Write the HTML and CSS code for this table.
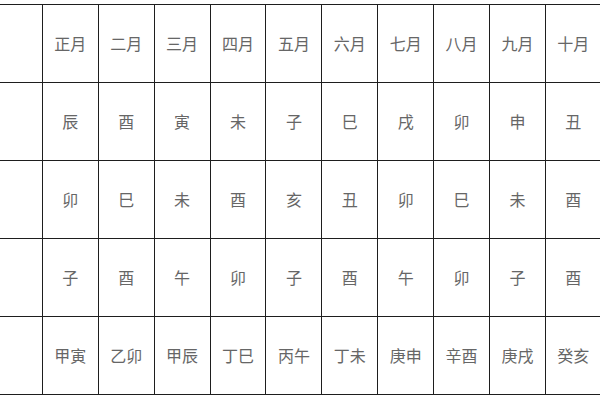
FILE: index.html
```html
<!DOCTYPE html>
<html lang="zh">
<head>
<meta charset="utf-8">
<link rel="stylesheet" href="styles.css">
</head>
<body>
<div class="wrap">
<table class="grid">
<tr><td></td><td>正月</td><td>二月</td><td>三月</td><td>四月</td><td>五月</td><td>六月</td><td>七月</td><td>八月</td><td>九月</td><td>十月</td></tr>
<tr><td></td><td>辰</td><td>酉</td><td>寅</td><td>未</td><td>子</td><td>巳</td><td>戌</td><td>卯</td><td>申</td><td>丑</td></tr>
<tr><td></td><td>卯</td><td>巳</td><td>未</td><td>酉</td><td>亥</td><td>丑</td><td>卯</td><td>巳</td><td>未</td><td>酉</td></tr>
<tr><td></td><td>子</td><td>酉</td><td>午</td><td>卯</td><td>子</td><td>酉</td><td>午</td><td>卯</td><td>子</td><td>酉</td></tr>
<tr><td></td><td>甲寅</td><td>乙卯</td><td>甲辰</td><td>丁巳</td><td>丙午</td><td>丁未</td><td>庚申</td><td>辛酉</td><td>庚戌</td><td>癸亥</td></tr>
</table>
</div>
</body>
</html>
```
FILE: styles.css
```css
html, body {
  margin: 0;
  padding: 0;
  background: #fff;
  overflow: hidden;
  width: 600px;
  height: 400px;
}
.wrap {
  padding-top: 4px;
  margin-left: -14px;
  width: 640px;
}
.grid {
  border-collapse: collapse;
  table-layout: fixed;
  font-family: "Noto Sans CJK SC", "Noto Sans", sans-serif;
  font-size: 16px;
  color: #666;
}
.grid td {
  width: 54.9px;
  height: 75px;
  padding: 0 0 2px 0;
  border: 1px solid #1e1e1e;
  text-align: center;
  vertical-align: middle;
  line-height: 1;
}
```
